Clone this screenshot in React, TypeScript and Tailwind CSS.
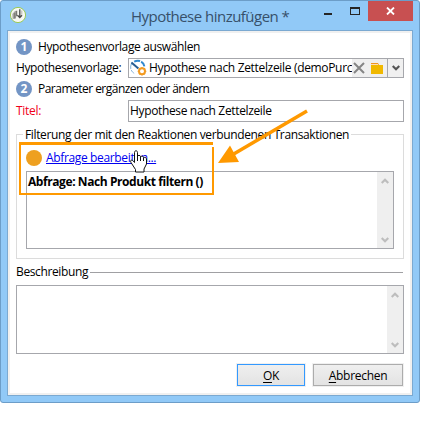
import React from "react";

function Chevron({ up = false, className = "" }: { up?: boolean; className?: string }) {
  return (
    <svg className={className} width="8" height="6" viewBox="0 0 8 6" fill="none" stroke="currentColor" strokeWidth="2.2">
      <path d={up ? "M0.7 5 L4 1.7 L7.3 5" : "M0.7 1 L4 4.3 L7.3 1"} />
    </svg>
  );
}

function ScrollBar() {
  return (
    <div className="flex w-4 flex-col items-center justify-between bg-[#efefef] pt-[6px] pb-[5px] text-[#bdbdbd]">
      <Chevron up />
      <Chevron />
    </div>
  );
}

function Step({ n, children, className = "" }: { n: string; children: React.ReactNode; className?: string }) {
  return (
    <div className="flex h-4 items-center">
      <span className="mr-[6px] flex size-4 items-center justify-center rounded-full bg-[#7395c5] text-[12px] leading-4 font-bold text-white">{n}</span>
      <span className={className}>{children}</span>
    </div>
  );
}

export default function App() {
  return (
    <div className="h-[421px] w-[447px] overflow-hidden bg-white font-['Open_Sans','Noto_Sans',sans-serif] text-[12px] leading-4 whitespace-nowrap text-black">
      <div className="relative flex h-[403px] w-[420px] flex-col rounded-[3px] border border-[#6c9dc8] bg-[#91c9f7] px-[6px] pb-[6px]">
        <header className="flex h-[29px] items-start">
          <svg className="mt-[5px] ml-[2px] shrink-0" width="18" height="18" viewBox="0 0 18 18">
            <circle cx="9" cy="9" r="7.6" fill="#f7f8f3" stroke="#9ccb57" strokeWidth="1" />
            <path d="M3.4 8 6 5 8.2 4.4V8.5L6.6 12.6 3.6 13Z" fill="#a3a39e" />
            <path d="M5.8 7v5.5M7.6 5v5" fill="none" stroke="#74746f" strokeWidth="1" />
            <path d="M10.8 3.2v7.4M8.4 9.2l2.4 2.3 2.2-2.3" fill="none" stroke="#4a4a48" strokeWidth="1.3" />
            <path d="M12.8 4.5v4.2" stroke="#b5b5b0" />
          </svg>
          <h1 className="ml-[104px] w-[158px] pt-[5px] text-[15px] leading-5 tracking-[-0.52px] text-[#37506a]">Hypothese hinzufügen *</h1>
          <span className="mt-[12px] ml-[35px] h-[2px] w-2 bg-[#252525]" />
          <span className="mt-[6px] ml-[18px] h-2 w-[10px] border border-t-2 border-[#252525]" />
          <span className="ml-2 flex h-5 w-[45px] items-center justify-center bg-[#c85051]">
            <svg width="9" height="8" viewBox="0 0 9 8" stroke="white" strokeWidth="1.8"><path d="M1 .5 8 7.5M8 .5 1 7.5" /></svg>
          </span>
        </header>

        <main className="h-[366px] w-[406px] border border-[#7ba9d1] bg-white">
          <div className="h-[364px] border-2 border-[#f0f0f0] px-[6px] pt-[6px]">
            <Step n="1" className="tracking-[-0.37px]">Hypothesenvorlage auswählen</Step>
            <div className="mt-[3px] flex h-5 items-center">
              <span className="w-[112px] tracking-[-0.37px]">Hypothesenvorlage:</span>
              <div className="flex h-5 w-[276px] border border-[#a6a7ac]">
                <svg className="shrink-0" width="18" height="18" viewBox="0 0 18 18" fill="none">
                  <path d="M1.8 10C1.2 7.5 2 5.2 3.4 3.8" stroke="#9cc3e2" strokeWidth="1.2" />
                  <path d="M5.2 2.6C9.5.3 14.6 2.4 15.4 7.4" stroke="#3189cf" strokeWidth="2" strokeDasharray="6 1.2" />
                  <path d="m2.4 3.4 7 6.2" stroke="#285d91" strokeWidth="2" />
                  <path d="M2.2 11c.7 1.6 1.6 2.6 3 3.4" stroke="#8eb7db" />
                  <circle cx="13" cy="12.3" r="3" stroke="#f29b22" strokeWidth="2" />
                  <path d="M13 8v1.3m0 6v1.3M8.7 12.3H10m6 0h1.3M10 9.3l.9.9m4.2 4.2.9.9m0-6-.9.9m-4.2 4.2-.9.9" stroke="#f29b22" strokeWidth="1.3" />
                </svg>
                <span className="ml-[2px] w-[203px] leading-[17px] tracking-[-0.33px]">Hypothese nach Zettelzeile (demoPurc</span>
                <div className="flex w-[35px] shrink-0 items-center bg-[#efefef]">
                  <svg className="ml-px" width="12" height="12" viewBox="0 0 12 12" stroke="#858585" strokeWidth="2"><path d="m1 1 10 10M11 1 1 11" /></svg>
                  <svg className="ml-[6px]" width="13" height="12" viewBox="0 0 13 12"><path d="M0 1h7l1 2H0Z" fill="#f1951f" /><path d="M0 3h12v9H0Z" fill="#f0b800" /><path d="M0 2.5h7" stroke="#fff" strokeWidth=".7" /></svg>
                </div>
                <div className="-my-px -mr-px ml-auto flex w-[17px] shrink-0 items-center justify-center border border-[#a6a7ac] bg-[#f0f0f0] text-[#555]"><Chevron /></div>
              </div>
            </div>
            <div className="mt-[3px]"><Step n="2" className="tracking-[-0.52px]">Parameter ergänzen oder ändern</Step></div>
            <div className="mt-[3px] flex h-[22px] items-center">
              <span className="w-[112px] tracking-[-0.3px] text-[#f00019]">Titel:</span>
              <div className="h-[22px] w-[276px] border border-[#a6a7ac] pl-px leading-[19px] tracking-[-0.35px]">Hypothese nach Zettelzeile</div>
            </div>

            <section className="mt-[12px] h-[125px] w-[388px] border border-[#dcdcdc] pl-[9px]">
              <div className="-mt-[8px] -ml-[3px] flex h-4"><span className="bg-white px-[2px] tracking-[-0.37px]">Filterung der mit den Reaktionen verbundenen Transaktionen</span></div>
              <div className="mt-[7px] flex h-4 items-center">
                <span className="mr-1 size-4 rounded-full bg-[#eea020]" />
                <a className="tracking-[-0.35px] text-[#0000f0] underline underline-offset-1">Abfrage bearbeiten...</a>
              </div>
              <div className="mt-[5px] flex h-[78px] w-[368px] justify-between border border-[#a6a7ac]">
                <span className="pt-[2px] pl-[1px] font-bold tracking-[-0.42px]">Abfrage: Nach Produkt filtern ()</span>
                <ScrollBar />
              </div>
            </section>

            <div className="mt-[5px] flex h-4 items-center">
              <span className="w-[74px] tracking-[-0.37px]">Beschreibung</span><span className="h-px flex-1 bg-[#a0a0a3]" /><span className="w-px" />
            </div>
            <div className="mt-[5px] flex h-[69px] w-[388px] justify-end border border-[#a6a7ac]"><ScrollBar /></div>
            <div className="mt-[10px] mr-px flex justify-end gap-2">
              <button className="h-[22px] w-[68px] border border-[#3399ff] bg-linear-to-b from-[#efefef] to-[#e3e3e3] leading-[19px] tracking-[-0.4px] outline outline-[#f0f0f0]"><u className="underline-offset-2">O</u>K</button>
              <button className="h-[22px] w-[90px] border border-[#acacac] bg-linear-to-b from-[#efefef] to-[#e3e3e3] leading-[19px] tracking-[-0.3px] outline outline-[#f0f0f0]"><u className="underline-offset-2">A</u>bbrechen</button>
            </div>
          </div>
        </main>

        <svg className="pointer-events-none absolute -top-px -left-px" width="420" height="403" viewBox="0 0 420 403">
          <path d="M19 142h194v3H21v48h191v-46h2v48H19Z" fill="#ff9900" />
          <path d="M307 111 232 155" stroke="#ff9900" strokeWidth="3.5" />
          <path d="M218 163 230 145.5 239 162Z" fill="#ff9900" />
          <path d="M134.5 162.5V152.5c0-2.3 3-2.3 3 0v4c0-1.5 3-1.5 3 0v.7c0-1.3 3-1.3 3 .3v.9c0-1.3 3-1.3 3 .6v5l-2.5 5v3h-8.5v-2.5l-4.4-6.8c-1.6-2.6 1-4 3.4-.2Z" fill="white" stroke="#111" strokeLinejoin="round" />
          <path d="M137.5 156v5M140.5 157v4M143.5 158v3" stroke="#111" />
        </svg>
      </div>
    </div>
  );
}
